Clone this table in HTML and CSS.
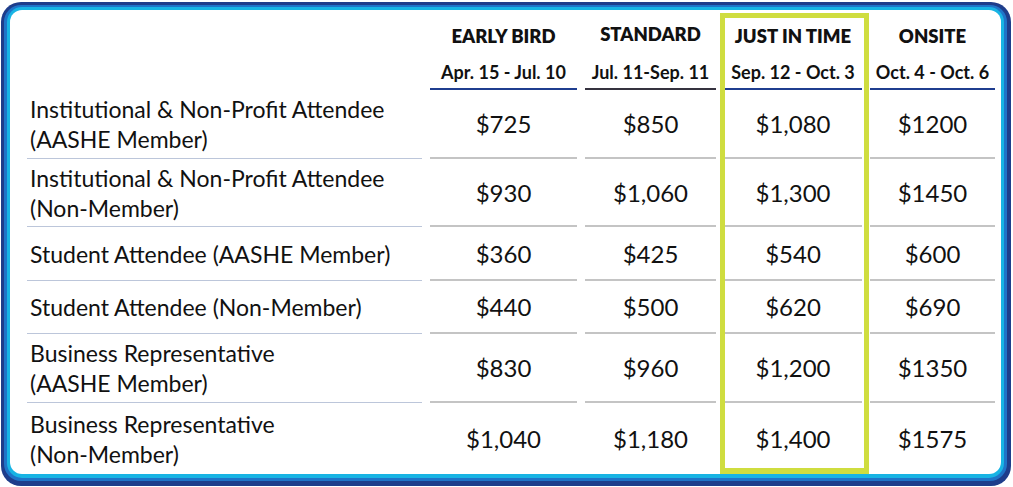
FILE: index.html
```html
<!DOCTYPE html>
<html lang="en">
<head>
<meta charset="utf-8">
<title>Registration Rates</title>
<link rel="stylesheet" href="styles.css">
</head>
<body>
<div class="frame">
  <div class="frame-mid">
    <div class="frame-in">
      <div class="panel">
        <div class="rates">
          <div class="hcell blank"></div>
          <div class="hcell eb"><div class="ht">EARLY BIRD</div><div class="hd">Apr. 15 - Jul. 10</div></div>
          <div class="hcell std"><div class="ht ht-up">STANDARD</div><div class="hd">Jul. 11-Sep. 11</div></div>
          <div class="hcell jit"><div class="ht">JUST IN TIME</div><div class="hd">Sep. 12 - Oct. 3</div></div>
          <div class="hcell ons"><div class="ht">ONSITE</div><div class="hd">Oct. 4 - Oct. 6</div></div>

          <div class="label">Institutional &amp; Non-Profit Attendee<br>(AASHE Member)</div>
          <div class="price">$725</div><div class="price">$850</div><div class="price">$1,080</div><div class="price">$1200</div>

          <div class="label">Institutional &amp; Non-Profit Attendee<br>(Non-Member)</div>
          <div class="price">$930</div><div class="price">$1,060</div><div class="price">$1,300</div><div class="price">$1450</div>

          <div class="label">Student Attendee (AASHE Member)</div>
          <div class="price">$360</div><div class="price">$425</div><div class="price">$540</div><div class="price">$600</div>

          <div class="label">Student Attendee (Non-Member)</div>
          <div class="price">$440</div><div class="price">$500</div><div class="price">$620</div><div class="price">$690</div>

          <div class="label">Business Representative<br>(AASHE Member)</div>
          <div class="price">$830</div><div class="price">$960</div><div class="price">$1,200</div><div class="price">$1350</div>

          <div class="label last">Business Representative<br>(Non-Member)</div>
          <div class="price last">$1,040</div><div class="price last">$1,180</div><div class="price last">$1,400</div><div class="price last">$1575</div>
        </div>
        <div class="highlight"></div>
      </div>
    </div>
  </div>
</div>
</body>
</html>
```

FILE: styles.css
```css
* { box-sizing: border-box; }
html, body { margin: 0; padding: 0; background: #ffffff; }
body {
  font-family: Lato, "Open Sans", sans-serif;
  color: #111111;
}
.frame {
  margin: 2px 0 0 1px;
  width: 1010px;
  height: 484px;
  background: #1e3d8b;
  border-radius: 20px;
  padding: 3px 4px 5px 3px;
}
.frame-mid {
  height: 100%;
  background: #1f74c8;
  border-radius: 17px;
  padding: 2px 3px 3px 3px;
}
.frame-in {
  height: 100%;
  background: #18b4e4;
  border-radius: 15px;
  padding: 3px 3px 4px 3px;
}
.panel {
  position: relative;
  height: 100%;
  background: #ffffff;
  border-radius: 12px;
  padding: 0 0 0 17px;
}
.rates {
  display: grid;
  grid-template-columns: 395px 147px 131px 138px 125px;
  grid-template-rows: 80px 69px 68px 54px 53px 69px 71px;
  column-gap: 8px;
}
.hcell {
  display: flex;
  flex-direction: column;
  align-items: center;
  border-bottom: 2px solid #1f3d8f;
  font-weight: 800;
}
.hcell.blank { border-bottom: none; }
.hcell.std { border-bottom-color: #35323f; }
.ht {
  font-size: 18.5px;
  line-height: 22px;
  margin-top: 15px;
}
.ht-up { margin-top: 13px; }
.hd {
  font-size: 18px;
  line-height: 20px;
  margin-top: 15px;
  white-space: nowrap;
  font-weight: 700;
}
.std .hd { margin-top: 17px; }
.label {
  display: flex;
  align-items: center;
  padding-left: 3px;
  font-size: 23px;
  line-height: 30px;
  border-bottom: 1px solid #bcc6da;
}
.price {
  display: flex;
  align-items: center;
  justify-content: center;
  font-size: 24px;
  border-bottom: 2px solid #c4c4c4;
}
.label.last, .price.last { border-bottom: none; }
.highlight {
  position: absolute;
  left: 710px;
  top: 3px;
  width: 149px;
  height: 461px;
  border: 5px solid #cfdd3f;
  border-bottom-width: 6px;
  pointer-events: none;
}
```
